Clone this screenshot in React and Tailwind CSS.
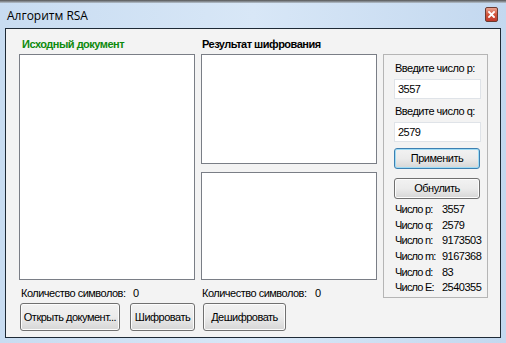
import React from 'react';

const STATS = [
  ['Число p:', '3557'],
  ['Число q:', '2579'],
  ['Число n:', '9173503'],
  ['Число m:', '9167368'],
  ['Число d:', '83'],
  ['Число E:', '2540355'],
];

const Btn = ({ children, className = '', focused = false }) => (
  <button
    className={`flex items-center justify-center whitespace-nowrap rounded-[3px] border bg-gradient-to-b from-[#f2f2f2] via-[#ebebeb] to-[#d6d6d6] text-black ${focused ? 'border-[#3c7fb1] shadow-[inset_0_0_0_1px_#9fdcf5]' : 'border-[#707070] shadow-[inset_0_0_0_1px_#fcfcfc]'} ${className}`}
  >
    {children}
  </button>
);

const Box = ({ className = '', children }) => (
  <div className={`border border-[#7a7e86] bg-white ${className}`}>{children}</div>
);

export default function App() {
  return (
    <div
      className="relative w-[506px] h-[343px] overflow-hidden whitespace-nowrap bg-gradient-to-r from-[#c8dcf1] via-[#d8e7f7] to-[#c3d8ef] text-[11px] leading-none tracking-[-0.5px]"
      style={{ fontFamily: '"Liberation Sans", Arial, sans-serif' }}
    >
      <div className="h-[3px] bg-gradient-to-b from-[#555] to-[#b8c4d0]" />

      {/* Title bar */}
      <div className="flex h-[25px] items-center justify-between pl-[7px] pr-[8px] tracking-normal">
        <span className="text-[12px] text-black" style={{ fontFamily: '"Open Sans", "Noto Sans", sans-serif' }}>Алгоритм RSA</span>
        <div className="mt-[-3px] flex h-[15px] w-[13px] items-center justify-center rounded-[2px] border border-[#6b3b32] bg-gradient-to-b from-[#e8a290] via-[#d2553c] to-[#c0392b]">
          <svg width="7" height="7" viewBox="0 0 7 7">
            <path d="M1 1 L6 6 M6 1 L1 6" stroke="#fff" strokeWidth="1.8" strokeLinecap="square" />
          </svg>
        </div>
      </div>

      {/* Client area */}
      <div className="ml-[5px] h-[310px] w-[496px] border border-[#1e2a36] bg-[#f3f3f3]">
        <div className="flex gap-[6px] pl-[13px]">
          {/* Left column */}
          <div className="flex w-[176px] flex-col">
            <div className="flex h-[25px] items-center pl-[3px] pt-[5px] font-bold text-[#0d8a0d]">Исходный документ</div>
            <Box className="h-[226px]" />
            <div className="flex h-[23px] items-center pl-[2px] pt-[3px]">
              <span className="w-[112px]">Количество символов:</span>
              <span>0</span>
            </div>
            <div className="flex gap-[10px] pl-[1px]">
              <Btn className="h-[28px] w-[100px]">Открыть документ...</Btn>
              <Btn className="h-[28px] w-[65px]">Шифровать</Btn>
            </div>
          </div>

          {/* Middle column */}
          <div className="flex w-[176px] flex-col">
            <div className="flex h-[25px] items-center pl-[1px] pt-[5px] font-bold text-black">Результат шифрования</div>
            <Box className="h-[110px]" />
            <Box className="mt-[8px] h-[108px]" />
            <div className="flex h-[23px] items-center pl-[1px] pt-[3px]">
              <span className="w-[113px]">Количество символов:</span>
              <span>0</span>
            </div>
            <Btn className="ml-[2px] h-[28px] w-[83px]">Дешифровать</Btn>
          </div>

          {/* Right group */}
          <div className="mt-[25px] flex h-[244px] w-[105px] flex-col border border-[#b5b5b5] px-[10px] pt-[8px]">
            <div className="pl-[1px]">Введите число p:</div>
            <div className="mt-[5px] flex h-[20px] w-[87px] items-center border border-[#dfe3e8] bg-white pl-[3px]">3557</div>
            <div className="mt-[7px] pl-[1px]">Введите число q:</div>
            <div className="mt-[5px] flex h-[20px] w-[87px] items-center border border-[#dfe3e8] bg-white pl-[3px]">2579</div>
            <Btn focused className="mt-[6px] h-[21px] w-[86px]">Применить</Btn>
            <Btn className="mt-[9px] h-[21px] w-[86px]">Обнулить</Btn>
            <div className="mt-[3px] flex flex-col">
              {STATS.map(([k, v]) => (
                <div key={k} className="flex h-[15.6px] items-center pl-[1px]">
                  <span className="w-[47px] shrink-0 tracking-[-0.8px]">{k}</span>
                  <span>{v}</span>
                </div>
              ))}
            </div>
          </div>
        </div>
      </div>
    </div>
  );
}
